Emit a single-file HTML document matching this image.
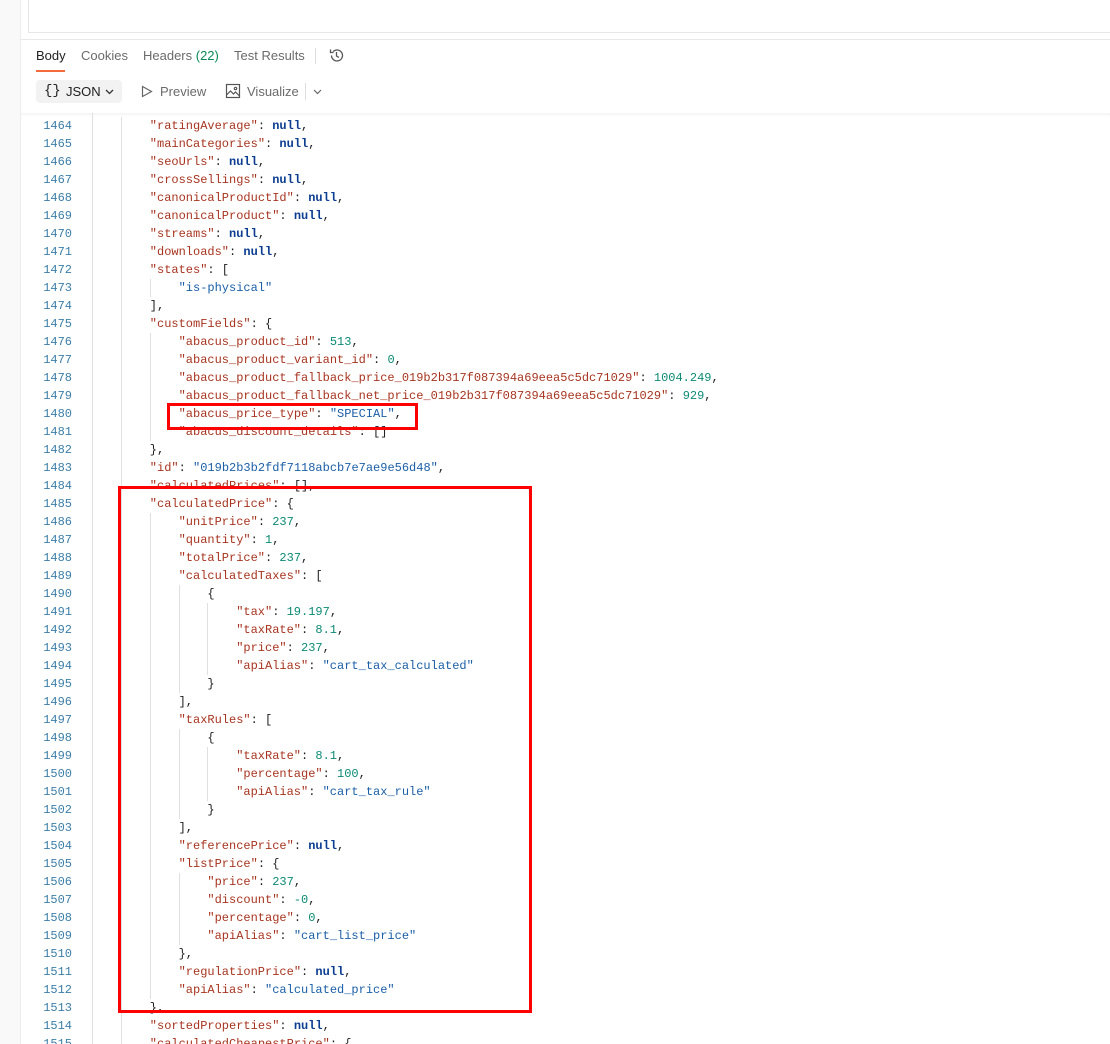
<!DOCTYPE html>
<html><head><meta charset="utf-8">
<style>
html,body{margin:0;padding:0;width:1110px;height:1044px;overflow:hidden;background:#fff;font-family:"Liberation Sans",sans-serif;}
.strip{position:absolute;left:0;top:0;width:20px;height:1044px;background:#f9f9f9;border-right:1px solid #ececec;}
.panel{position:absolute;left:28px;top:0;width:1090px;height:32px;border:1px solid #e6e6e6;border-top:none;border-right:none;background:#fff;}
.hline{position:absolute;left:21px;top:39px;width:1089px;height:1px;background:#e8e8e8;}
.tabs{position:absolute;top:46px;left:36px;font-size:13px;color:#6b6b6b;}
.tabs span{position:absolute;white-space:nowrap;}
.act{color:#212121;}
.uline{position:absolute;left:36px;top:70px;width:29px;height:2px;background:#f26b3a;}
.jsonbtn{position:absolute;left:36px;top:80px;width:86px;height:23px;background:#f2f2f2;border-radius:4px;font-size:13px;color:#212121;}
.tb{position:absolute;font-size:13px;color:#6b6b6b;top:84px;white-space:nowrap;}
.editor{position:absolute;left:21px;top:113px;width:1089px;height:931px;overflow:hidden;box-shadow:inset 0 4px 4px -3px #eee;}
.gut{position:absolute;left:0;top:4px;width:51px;text-align:right;font-family:"Liberation Mono",monospace;font-size:12px;line-height:18px;color:#3b7ea8;}
.vg{position:absolute;top:0;height:931px;width:1px;background:#e0e0e0;}
.code{position:absolute;left:100px;top:4px;font-family:"Liberation Mono",monospace;font-size:12px;line-height:18px;color:#212121;}
.code div{height:18px;white-space:pre;}
.code i{display:inline-block;width:28.8px;height:18px;vertical-align:top;box-shadow:inset 1px 0 0 #e0e0e0;}
.k{color:#a8341f}.s{color:#1a5fa8}.n{color:#0a8a74}.l{color:#0b3d91;font-weight:bold}
.box{position:absolute;border:3px solid #ff0000;box-sizing:border-box;}
</style></head><body>
<div class="strip"></div>
<div class="panel"></div>
<div class="hline"></div>
<div class="tabs">
<span class="act" style="left:0;top:2px">Body</span>
<span style="left:45px;top:2px">Cookies</span>
<span style="left:107px;top:2px">Headers <span style="position:static;color:#0a8a56">(22)</span></span>
<span style="left:198px;top:2px">Test Results</span>
<span style="left:279px;top:2px;width:1px;height:16px;background:#ddd"></span>
<svg style="position:absolute;left:292px;top:1px" width="17" height="17" viewBox="0 0 17 17" fill="none" stroke="#555" stroke-width="1.3"><path d="M3.5 8.5a5.5 5.5 0 1 0 1.6-3.9"/><path d="M2.5 2.5v3h3"/><path d="M8.5 5v4l2.5 1.5"/></svg>
</div>
<div class="uline"></div>
<div class="jsonbtn"><span style="position:absolute;left:8px;top:3px;font-family:'Liberation Mono',monospace;font-size:14px">{}</span><span style="position:absolute;left:30px;top:4px">JSON</span>
<svg style="position:absolute;left:69px;top:9px" width="9" height="6" viewBox="0 0 9 6" fill="none" stroke="#333" stroke-width="1.3"><path d="M1 1l3.5 3.5L8 1"/></svg></div>
<svg style="position:absolute;left:141px;top:85px" width="12" height="13" viewBox="0 0 12 13" fill="none" stroke="#666" stroke-width="1.2"><path d="M1.5 1.5v10l9-5z"/></svg>
<span class="tb" style="left:160px">Preview</span>
<svg style="position:absolute;left:225px;top:83px" width="16" height="16" viewBox="0 0 16 16" fill="none" stroke="#555" stroke-width="1.2"><rect x="1.5" y="1.5" width="13" height="13"/><path d="M1.5 12l4-4 3 3 2-2 4 4"/><circle cx="10.5" cy="5.5" r="1.2"/></svg>
<span class="tb" style="left:247px">Visualize</span>
<span style="position:absolute;left:305px;top:83px;width:1px;height:17px;background:#ddd"></span>
<svg style="position:absolute;left:313px;top:89px" width="9" height="6" viewBox="0 0 9 6" fill="none" stroke="#666" stroke-width="1.2"><path d="M1 1l3.5 3.5L8 1"/></svg>

<div class="editor">
<div class="vg" style="left:71px"></div>
<div class="gut">1464<br>1465<br>1466<br>1467<br>1468<br>1469<br>1470<br>1471<br>1472<br>1473<br>1474<br>1475<br>1476<br>1477<br>1478<br>1479<br>1480<br>1481<br>1482<br>1483<br>1484<br>1485<br>1486<br>1487<br>1488<br>1489<br>1490<br>1491<br>1492<br>1493<br>1494<br>1495<br>1496<br>1497<br>1498<br>1499<br>1500<br>1501<br>1502<br>1503<br>1504<br>1505<br>1506<br>1507<br>1508<br>1509<br>1510<br>1511<br>1512<br>1513<br>1514<br>1515</div>
<div class="code">
<div><i></i><span class="k">"ratingAverage"</span>: <span class="l">null</span>,</div>
<div><i></i><span class="k">"mainCategories"</span>: <span class="l">null</span>,</div>
<div><i></i><span class="k">"seoUrls"</span>: <span class="l">null</span>,</div>
<div><i></i><span class="k">"crossSellings"</span>: <span class="l">null</span>,</div>
<div><i></i><span class="k">"canonicalProductId"</span>: <span class="l">null</span>,</div>
<div><i></i><span class="k">"canonicalProduct"</span>: <span class="l">null</span>,</div>
<div><i></i><span class="k">"streams"</span>: <span class="l">null</span>,</div>
<div><i></i><span class="k">"downloads"</span>: <span class="l">null</span>,</div>
<div><i></i><span class="k">"states"</span>: [</div>
<div><i></i><i></i><span class="s">"is-physical"</span></div>
<div><i></i>],</div>
<div><i></i><span class="k">"customFields"</span>: {</div>
<div><i></i><i></i><span class="k">"abacus_product_id"</span>: <span class="n">513</span>,</div>
<div><i></i><i></i><span class="k">"abacus_product_variant_id"</span>: <span class="n">0</span>,</div>
<div><i></i><i></i><span class="k">"abacus_product_fallback_price_019b2b317f087394a69eea5c5dc71029"</span>: <span class="n">1004.249</span>,</div>
<div><i></i><i></i><span class="k">"abacus_product_fallback_net_price_019b2b317f087394a69eea5c5dc71029"</span>: <span class="n">929</span>,</div>
<div><i></i><i></i><span class="k">"abacus_price_type"</span>: <span class="s">"SPECIAL"</span>,</div>
<div><i></i><i></i><span class="k">"abacus_discount_details"</span>: []</div>
<div><i></i>},</div>
<div><i></i><span class="k">"id"</span>: <span class="s">"019b2b3b2fdf7118abcb7e7ae9e56d48"</span>,</div>
<div><i></i><span class="k">"calculatedPrices"</span>: [],</div>
<div><i></i><span class="k">"calculatedPrice"</span>: {</div>
<div><i></i><i></i><span class="k">"unitPrice"</span>: <span class="n">237</span>,</div>
<div><i></i><i></i><span class="k">"quantity"</span>: <span class="n">1</span>,</div>
<div><i></i><i></i><span class="k">"totalPrice"</span>: <span class="n">237</span>,</div>
<div><i></i><i></i><span class="k">"calculatedTaxes"</span>: [</div>
<div><i></i><i></i><i></i>{</div>
<div><i></i><i></i><i></i><i></i><span class="k">"tax"</span>: <span class="n">19.197</span>,</div>
<div><i></i><i></i><i></i><i></i><span class="k">"taxRate"</span>: <span class="n">8.1</span>,</div>
<div><i></i><i></i><i></i><i></i><span class="k">"price"</span>: <span class="n">237</span>,</div>
<div><i></i><i></i><i></i><i></i><span class="k">"apiAlias"</span>: <span class="s">"cart_tax_calculated"</span></div>
<div><i></i><i></i><i></i>}</div>
<div><i></i><i></i>],</div>
<div><i></i><i></i><span class="k">"taxRules"</span>: [</div>
<div><i></i><i></i><i></i>{</div>
<div><i></i><i></i><i></i><i></i><span class="k">"taxRate"</span>: <span class="n">8.1</span>,</div>
<div><i></i><i></i><i></i><i></i><span class="k">"percentage"</span>: <span class="n">100</span>,</div>
<div><i></i><i></i><i></i><i></i><span class="k">"apiAlias"</span>: <span class="s">"cart_tax_rule"</span></div>
<div><i></i><i></i><i></i>}</div>
<div><i></i><i></i>],</div>
<div><i></i><i></i><span class="k">"referencePrice"</span>: <span class="l">null</span>,</div>
<div><i></i><i></i><span class="k">"listPrice"</span>: {</div>
<div><i></i><i></i><i></i><span class="k">"price"</span>: <span class="n">237</span>,</div>
<div><i></i><i></i><i></i><span class="k">"discount"</span>: <span class="n">-0</span>,</div>
<div><i></i><i></i><i></i><span class="k">"percentage"</span>: <span class="n">0</span>,</div>
<div><i></i><i></i><i></i><span class="k">"apiAlias"</span>: <span class="s">"cart_list_price"</span></div>
<div><i></i><i></i>},</div>
<div><i></i><i></i><span class="k">"regulationPrice"</span>: <span class="l">null</span>,</div>
<div><i></i><i></i><span class="k">"apiAlias"</span>: <span class="s">"calculated_price"</span></div>
<div><i></i>},</div>
<div><i></i><span class="k">"sortedProperties"</span>: <span class="l">null</span>,</div>
<div><i></i><span class="k">"calculatedCheapestPrice"</span>: {</div>
</div>
</div>
<div class="box" style="left:167px;top:403px;width:251px;height:27px"></div>
<div class="box" style="left:118px;top:486px;width:414px;height:527px"></div>
</body></html>
